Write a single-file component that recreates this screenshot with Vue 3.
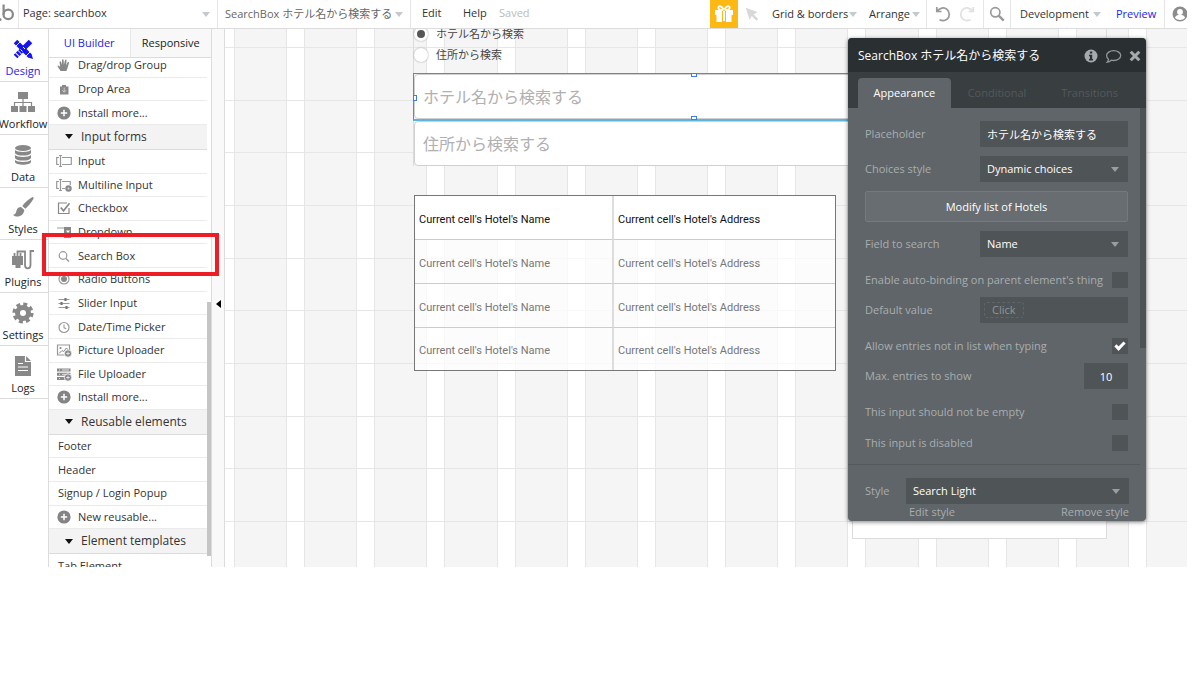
<template>

  <div class="app">

    <header class="topbar">

      <a class="logo" href="#" aria-label="Home">
        <svg width="18" height="28" viewBox="0 0 18 28">
          <circle cx="8.2" cy="14.4" r="4.700" fill="none" stroke="#888" stroke-width="2.200" />
          <path d="M3.600 4.500v10" stroke="#888" stroke-width="2.200" />
          <circle cx="0" cy="19.600" r="1.500" fill="#888" />
        </svg>
      </a>

      <div class="picker page-picker">
        <select aria-label="Page">
          <option>Page: searchbox</option>
        </select>
        <i class="caret"></i>
      </div>

      <div class="picker element-picker">
        <select aria-label="Element">
          <option>SearchBox ホテル名から検索する</option>
        </select>
        <i class="caret"></i>
      </div>

      <nav class="menus">
        <button>Edit</button>
        <button>Help</button>
        <span class="saved">Saved</span>
      </nav>

      <button class="gift" aria-label="Gift">
        <svg width="20" height="18" viewBox="0 0 20 18" fill="#fff">
          <path d="M1 5h7v5H1zM12 5h7v5h-7zM2.500 10H8v7H2.500zM12 10h5.500v7H12zM9 6h2v10H9z" />
          <path d="M9.500 4.800C5 5 4 3.800 4.300 2.400 4.900.4 8 .8 9.500 4.500M10.500 4.800c4.500.2 5.500-1 5.200-2.400C15.100.4 12 .8 10.500 4.500" fill="none" stroke="#fff" stroke-width="1.800" />
        </svg>
      </button>

      <button class="tool pointer" aria-label="Select">
        <svg width="14" height="14" viewBox="0 0 14 14">
          <path d="M.8 .8l11.700 4.300-3.900 2.400 4.700 4.400-1.900 1.900-4.600-4.700L4.600 13z" fill="#d8d8d8" />
        </svg>
      </button>

      <button class="drop">Grid &amp; borders <i class="caret"></i></button>
      <button class="drop arrange">Arrange <i class="caret"></i></button>

      <div class="history">
        <button class="tool" aria-label="Undo">
          <svg width="16" height="16" viewBox="0 0 16 16" fill="none" stroke="#999" stroke-width="1.700">
            <path d="M1.800 1v4.500h4.700M2.300 5.300C4.500 1.800 9 .8 12 3.400s3 7.500 0 9.800c-2.200 1.800-5 1.700-7.500.6" />
          </svg>
        </button>
        <button class="tool" aria-label="Redo">
          <svg width="16" height="16" viewBox="0 0 16 16" fill="none" stroke="#e0e0e0" stroke-width="1.700">
            <path d="M14.200 1v4.500H9.500M13.700 5.300C11.500 1.800 7 .8 4 3.400s-3 7.500 0 9.800c2.200 1.800 5 1.700 7.500.6" />
          </svg>
        </button>
      </div>

      <button class="tool find" aria-label="Search">
        <svg width="16" height="16" viewBox="0 0 16 16" fill="none" stroke="#999">
          <circle cx="6.300" cy="6.300" r="4.600" stroke-width="1.700" />
          <path d="M9.700 9.700l5 5" stroke-width="2.400" />
        </svg>
      </button>

      <button class="drop version">Development <i class="caret"></i></button>
      <a class="preview" href="#">Preview</a>

      <button class="avatar" aria-label="Account">
        <svg width="16" height="16" viewBox="0 0 16 16">
          <circle cx="8" cy="8" r="7.500" fill="#8c8c8c" />
          <circle cx="8" cy="6" r="2.900" fill="#fff" />
          <path d="M3 12c.2-2.600 2.500-3.300 5-3.300s4.800.7 5 3.300c-1.300 1.300-3 2-5 2s-3.700-.7-5-2z" fill="#fff" />
        </svg>
      </button>

    </header>

    <div class="workspace">

      <nav class="rail">
        <a
          v-for="tab in railTabs"
          :key="tab.name"
          href="#"
          :class="{ active: tab.name === 'Design' }"
        >
          <svg width="24" height="24" viewBox="0 0 24 24" v-html="tab.icon"></svg>
          <span>{{ tab.name }}</span>
        </a>
      </nav>

      <aside class="palette">

        <div class="palette-tabs">
          <button class="current">UI Builder</button>
          <button>Responsive</button>
        </div>

        <div class="palette-scroll">
          <ul class="palette-list">
            <li
              v-for="(entry, index) in entries"
              :key="index"
              :class="{ heading: entry.heading }"
            >
              <i v-if="entry.heading" class="caret dark"></i>
              <svg
                v-else-if="entry.icon"
                width="16"
                height="16"
                viewBox="0 0 16 16"
                v-html="icons[entry.icon]"
              ></svg>
              <span>{{ entry.name }}</span>
            </li>
          </ul>
          <div class="palette-thumb"></div>
        </div>

        <div class="highlight"></div>

      </aside>

      <button class="collapse" aria-label="Collapse"><i></i></button>

      <main class="canvas">

        <div class="columns">
          <div v-for="n in 13" :key="n"></div>
        </div>

        <div class="rows">
          <div v-for="n in 10" :key="n"></div>
        </div>

        <section class="search-group">

          <div class="radios">
            <label>
              <input v-model="mode" type="radio" value="name">
              ホテル名から検索
            </label>
            <label>
              <input v-model="mode" type="radio" value="address">
              住所から検索
            </label>
          </div>

          <div class="selected">
            <input type="text" aria-label="ホテル名から検索する" placeholder="ホテル名から検索する">
            <i class="grip top"></i>
            <i class="grip left"></i>
            <i class="grip bottom"></i>
          </div>

          <input class="address" type="text" aria-label="住所から検索する" placeholder="住所から検索する">

        </section>

        <table class="hotels">
          <tbody>
            <tr v-for="n in 4" :key="n">
              <td>Current cell's Hotel's Name</td>
              <td>Current cell's Hotel's Address</td>
            </tr>
          </tbody>
        </table>

        <div class="map-box"></div>

        <section class="editor">

          <header class="editor-title">
            <h2>SearchBox ホテル名から検索する</h2>
            <button aria-label="Info">
              <svg width="14" height="14" viewBox="0 0 14 14">
                <circle cx="7" cy="7" r="6.500" fill="#a4abae" />
                <path d="M5.900 2.500h2.300v2H5.900zM5 5.700h3.200v4.200H9v1.500H5V9.900h.9V7.200H5z" fill="#2a3032" />
              </svg>
            </button>
            <button aria-label="Comment">
              <svg width="17" height="15" viewBox="0 0 17 15" fill="none" stroke="#8f9799" stroke-width="1.300">
                <path d="M8.700 1.700c4 0 7 2.200 7 4.900s-3 4.900-7 4.900c-.9 0-1.700-.1-2.400-.3-1.300 1.200-2.600 1.800-4.100 2 .8-.9 1.200-1.800 1.300-2.900C2.300 9.400 1.600 8 1.600 6.600c0-2.700 3.100-4.900 7.100-4.900z" />
              </svg>
            </button>
            <button aria-label="Close">
              <svg width="12" height="12" viewBox="0 0 12 12">
                <path d="M1.700 1.700l8.600 8.600M10.300 1.700l-8.600 8.600" stroke="#a4abae" stroke-width="3" />
              </svg>
            </button>
          </header>

          <div class="editor-tabs">
            <button class="current">Appearance</button>
            <button>Conditional</button>
            <button>Transitions</button>
          </div>

          <div class="editor-body">

            <div class="field">
              <label for="placeholder">Placeholder</label>
              <input id="placeholder" type="text" value="ホテル名から検索する">
            </div>

            <div class="field">
              <label for="choices">Choices style</label>
              <div class="select">
                <select id="choices"><option>Dynamic choices</option></select>
                <i class="caret"></i>
              </div>
            </div>

            <button class="modify">Modify list of Hotels</button>

            <div class="field">
              <label for="search-field">Field to search</label>
              <div class="select">
                <select id="search-field"><option>Name</option></select>
                <i class="caret"></i>
              </div>
            </div>

            <div class="field check">
              <label for="binding">Enable auto-binding on parent element's thing</label>
              <input id="binding" type="checkbox">
            </div>

            <div class="field">
              <label for="default">Default value</label>
              <button id="default" class="expression"><span>Click</span></button>
            </div>

            <div class="field check">
              <label for="allow">Allow entries not in list when typing</label>
              <input id="allow" type="checkbox" checked>
            </div>

            <div class="field">
              <label for="max">Max. entries to show</label>
              <input id="max" class="number" type="text" value="10">
            </div>

            <div class="field check">
              <label for="required">This input should not be empty</label>
              <input id="required" type="checkbox">
            </div>

            <div class="field check">
              <label for="disabled">This input is disabled</label>
              <input id="disabled" type="checkbox">
            </div>

            <div class="style-block">
              <div class="style-row">
                <label for="style">Style</label>
                <div class="select">
                  <select id="style"><option>Search Light</option></select>
                  <i class="caret"></i>
                </div>
              </div>
              <div class="style-links">
                <a href="#">Edit style</a>
                <a href="#">Remove style</a>
              </div>
            </div>

            <div class="editor-thumb"></div>

          </div>

        </section>

      </main>

    </div>

  </div>

</template>

<script setup>

import { ref } from "vue"

const mode = ref("name")

const railTabs = [
  {
    name: "Design",
    icon: `<g fill="none" stroke="#1414f0">
      <path d="M4.500 4.500L19 19" stroke-width="5"/>
      <path d="M19.500 4.500L9 15" stroke-width="5"/>
      <path d="M8.500 15.500L4.500 19.500" stroke-width="5" stroke-dasharray="2.500 1"/>
      <path d="M5 9l4-4M15 19l4-4M9.500 12.500l2 2M12 10l2 2" stroke="#fff" stroke-width="1"/>
      </g><path d="M17 20.500l3.500-3.500 1.500 5z" fill="#1414f0"/>`
  },
  {
    name: "Workflow",
    icon: `<path d="M7 2h10v7H7zM0 16h7v6H0zM8.500 16h7v6h-7zM17 16h7v6h-7z" fill="#888"/>
      <path d="M12 9v7M3.500 16v-3.500h17V16" fill="none" stroke="#888" stroke-width="1.200"/>`
  },
  {
    name: "Data",
    icon: `<g fill="#888"><ellipse cx="12" cy="5" rx="8" ry="3"/>
      <path d="M4 7c2 2.600 14 2.600 16 0v3c-1 3.400-15 3.400-16 0zM4 12c2 2.600 14 2.600 16 0v3c-1 3.400-15 3.400-16 0zM4 17c2 2.600 14 2.600 16 0v2c-1 3.600-15 3.600-16 0z"/></g>`
  },
  {
    name: "Styles",
    icon: `<path d="M21.500 2c1.200 0 1.400 1 .8 2-2.500 4-5 7.500-8 9.800l-3-2.800C14 7.500 18 3.800 21.500 2z" fill="#888"/>
      <path d="M10 12l3.300 3c-.2 3.800-3.300 6.500-7 6.500-2 0-3.500-.8-4.300-1.800 3-.5 2.700-2 3.600-4.500C6.300 13 8 12 10 12z" fill="#888"/>`
  },
  {
    name: "Plugins",
    icon: `<path d="M1 8h11v9H9.500v3h-5v-3H1z" fill="#888"/>
      <path d="M3.500 9V5M9.500 9V5" stroke="#888" stroke-width="1.800"/>
      <path d="M6.500 8V3.500h7.500V17c0 4.500 5.500 4.500 5.500 0V3H23" fill="none" stroke="#888" stroke-width="1.800"/>`
  },
  {
    name: "Settings",
    icon: `<circle cx="12" cy="12" r="5.500" fill="none" stroke="#888" stroke-width="5"/>
      <circle cx="12" cy="12" r="8.800" fill="none" stroke="#888" stroke-width="3.600" stroke-dasharray="3.900 3.010"/>`
  },
  {
    name: "Logs",
    icon: `<path d="M4 2h11l5 5v15H4z" fill="#888"/>
      <path d="M14.500 2v5.500H20M7 9.500h5M7 13h10M7 16.500h10" fill="none" stroke="#fff" stroke-width="1.200"/>`
  }
]

const badge = `<circle cx="12" cy="11.500" r="3.700" fill="#888" stroke="#fff" stroke-width=".8"/>
  <path d="M12 9.700v3.600M10.200 11.500h3.600" stroke="#ddd" stroke-width="1"/>`

const icons = {
  hand: `<path d="M4.500 14c-1-2-2.700-3.600-3-5 .8-1 2 .2 2.700 1L3.500 5c.4-1.200 1.400-.8 1.600 0l.8 3L6 3c.4-1.100 1.500-.9 1.600 0l.3 4.700L9 3.200c.5-1 1.500-.6 1.500.3l-.4 5 1.500-3.200c.7-.8 1.600-.3 1.400.6L11.500 11c-.3 1.500-.7 2.300-1.300 3z" fill="#888"/>`,
  area: `<path d="M4 5.500h2V4h4v1.500h2.500v8H4z" fill="#888"/>
    <path d="M8.200 6.500v4.500M6.300 9.300l1.900 2 1.900-2" fill="none" stroke="#ccc" stroke-width="1"/>`,
  plus: `<circle cx="8" cy="8" r="6.600" fill="#848484"/>
    <path d="M8 4.800v6.400M4.800 8h6.400" stroke="#fff" stroke-width="1.500"/>`,
  input: `<path d="M3 4.500H.7v7H3M6 4.500h9.300v7H6M4.500 2.500v11M3 2.500h3M3 13.500h3" fill="none" stroke="#999" stroke-width="1.200"/>`,
  multi: `<path d="M3 4.500H.7v7H3M6 4.500h8.300V8M6 11.500h3M4.500 2.500v11M3 2.500h3M3 13.500h3" fill="none" stroke="#999" stroke-width="1.200"/>
    <circle cx="12.500" cy="11.500" r="3.200" fill="#888"/><circle cx="12.500" cy="11.500" r="1" fill="#ddd"/>`,
  check: `<path d="M13 8v5.500H2.500V3H11" fill="none" stroke="#888" stroke-width="1.200"/>
    <path d="M4.800 7.500l2.700 3.300 6-7.500" fill="none" stroke="#888" stroke-width="1.700"/>`,
  dropdown: `<path d="M1 4h8M1 12.500h8" stroke="#999" stroke-width="1.200"/>
    <path d="M8 3h7v11H8z" fill="#888"/><path d="M10 6.500h4l-2 2.500z" fill="#fff"/>`,
  search: `<circle cx="7" cy="7.500" r="3.800" fill="none" stroke="#999" stroke-width="1.200"/>
    <path d="M10 10.500l3 3" stroke="#999" stroke-width="1.500"/>`,
  radio: `<circle cx="8" cy="8" r="5" fill="none" stroke="#999" stroke-width="1.200"/><circle cx="8" cy="8" r="3" fill="#888"/>`,
  slider: `<path d="M2.500 4.500h11M2.500 8.500h11M2.500 12.500h11" stroke="#999" stroke-width="1.200"/>
    <path d="M9.500 3v3M5.500 7v3M10.500 11v3" stroke="#777" stroke-width="2.200"/>`,
  clock: `<circle cx="8" cy="8.500" r="5" fill="none" stroke="#999" stroke-width="1.200"/>
    <path d="M8 5.500v3.300l2.300 1" fill="none" stroke="#999" stroke-width="1.100"/>`,
  picture: `<path d="M1.500 3h12v10h-12z" fill="none" stroke="#999" stroke-width="1.200"/>
    <circle cx="4.500" cy="6" r="1.100" fill="#888"/><path d="M3 11.500l3-3 1.500 1 3-3.500 2 2.500" fill="none" stroke="#888"/>${badge}`,
  file: `<path d="M1 2.500h13.500v3H1zM1 6.800h13.500v3H1zM1 11h13.500v3H1z" fill="#888"/>
    <path d="M3 4h1M6 4h7M3 8.300h1M6 8.300h7M3 12.500h1" stroke="#fff" stroke-width=".8"/>${badge}`
}

const entries = [
  { name: "Drag/drop Group", icon: "hand" },
  { name: "Drop Area", icon: "area" },
  { name: "Install more...", icon: "plus" },
  { name: "Input forms", heading: true },
  { name: "Input", icon: "input" },
  { name: "Multiline Input", icon: "multi" },
  { name: "Checkbox", icon: "check" },
  { name: "Dropdown", icon: "dropdown" },
  { name: "Search Box", icon: "search" },
  { name: "Radio Buttons", icon: "radio" },
  { name: "Slider Input", icon: "slider" },
  { name: "Date/Time Picker", icon: "clock" },
  { name: "Picture Uploader", icon: "picture" },
  { name: "File Uploader", icon: "file" },
  { name: "Install more...", icon: "plus" },
  { name: "Reusable elements", heading: true },
  { name: "Footer" },
  { name: "Header" },
  { name: "Signup / Login Popup" },
  { name: "New reusable...", icon: "plus" },
  { name: "Element templates", heading: true },
  { name: "Tab Element" }
]

</script>

<style>

body{
  background:#fff;
}

</style>

<style scoped>

*{
  box-sizing:border-box;
}

.app{
  display:flex;
  flex-direction:column;
  height:84vh;
  min-height:480px;
  margin-right:13px;
  overflow:hidden;
  font-family:"Open Sans", "Noto Sans CJK JP", sans-serif;
  font-size:11px;
  line-height:16px;
  color:#333;
}

button,
input,
select{
  margin:0;
  padding:0;
  border:0;
  border-radius:0;
  background:none;
  font:inherit;
  color:inherit;
  appearance:none;
  outline:none;
}

a{
  color:inherit;
  text-decoration:none;
}

svg{
  display:block;
  flex:none;
}

.caret{
  flex:none;
  border:4px solid transparent;
  border-top:5px solid #c3c9cd;
  border-bottom:0;
}

.caret.dark{
  border-top-color:#111;
}

/* top bar */

.topbar{
  flex:none;
  display:flex;
  height:29px;
  border-bottom:1px solid #dcdcdc;
}

.topbar > *{
  flex:none;
  display:flex;
  align-items:center;
}

.logo{
  width:18px;
}

.picker{
  position:relative;
  border-left:1px solid #e6e6e6;
}

.picker select{
  width:100%;
  height:100%;
  padding:0 0 2px 4px;
}

.picker .caret{
  position:absolute;
  right:7px;
}

.page-picker{
  width:199px;
}

.element-picker{
  width:194px;
  color:#666;
  border-right:1px solid #e6e6e6;
}

.element-picker select{
  padding:0 0 0 7px;
}

.topbar .menus{
  flex:1;
  padding:0 0 2px 11px;
}

.menus button{
  width:41px;
  text-align:left;
}

.menus .saved{
  margin-left:-5px;
  color:#bbb;
}

.topbar .gift{
  width:28px;
  justify-content:center;
  background:#fdb813;
}

.tool{
  display:flex;
  align-items:center;
  justify-content:center;
}

.pointer{
  width:28px;
}

.drop{
  width:97px;
  justify-content:space-between;
  padding:0 6px;
  white-space:nowrap;
}

.arrange{
  width:63px;
  padding:0 6px;
}

.history{
  width:57px;
  justify-content:space-evenly;
  border-left:1px solid #e6e6e6;
}

.find{
  width:28px;
  border:solid #e6e6e6;
  border-width:0 1px;
}

.version{
  width:97px;
  padding:0 7px 0 9px;
}

.preview{
  width:56px;
  padding-left:8px;
  color:#2424e8;
}

.topbar .avatar{
  width:23px;
  padding-left:7px;
  overflow:hidden;
  border-left:1px solid #e6e6e6;
}

/* left side */

.workspace{
  flex:1;
  display:flex;
  min-height:0;
}

.rail{
  flex:none;
  display:grid;
  grid-template-columns:100%;
  grid-auto-rows:1fr;
  width:49px;
  height:370px;
}

.rail a{
  display:flex;
  flex-direction:column;
  align-items:center;
  justify-content:flex-end;
  gap:2px;
  padding:0 3px 2px 0;
  border-bottom:1px solid #dcdcdc;
  color:#222;
}

.rail a.active{
  color:#2424e8;
}

.palette{
  position:relative;
  flex:none;
  display:flex;
  flex-direction:column;
  width:163px;
  border-right:1px solid #dcdcdc;
  box-shadow:-1px 0 #dcdcdc;
}

.palette-tabs{
  flex:none;
  display:flex;
  height:29px;
  border-bottom:1px solid #dcdcdc;
}

.palette-tabs button{
  flex:1;
  background:#f8f8f8;
  border-left:1px solid #e6e6e6;
  color:#222;
}

.palette-tabs .current{
  background:#fff;
  border-left:0;
  color:#2424e8;
}

.palette-scroll{
  position:relative;
  flex:1;
  overflow:hidden;
}

.palette-list{
  display:flex;
  flex-direction:column;
  height:524px;
  margin:-4px 4px 0 0;
  padding:0;
  list-style:none;
}

.palette-list li{
  flex:1;
  display:flex;
  align-items:center;
  gap:6px;
  padding-left:7px;
  border-bottom:1px solid #ebebeb;
}

.palette-list li > span:only-child{
  padding-left:2px;
}

.palette-list .heading{
  flex:0 0 25px;
  gap:8px;
  padding-left:16px;
  background:#f3f3f3;
  border-bottom:1px solid #dcdcdc;
  font-size:12px;
}

.palette-thumb{
  position:absolute;
  top:244px;
  right:0;
  bottom:11px;
  width:4px;
  background:#c5c5c5;
}

.highlight{
  position:absolute;
  z-index:2;
  top:204px;
  left:-7px;
  right:-8px;
  height:43px;
  border:4px solid #ee1c24;
}

.collapse{
  flex:none;
  display:flex;
  align-items:center;
  justify-content:center;
  width:13px;
  padding-top:12px;
  background:#f9f9f9;
  border-right:1px solid #dcdcdc;
}

.collapse i{
  border:4px solid transparent;
  border-right:5px solid #000;
  border-left:0;
}

/* canvas */

.canvas{
  position:relative;
  flex:1;
  overflow:hidden;
  background:#f5f5f5;
}

.columns{
  position:absolute;
  inset:0 40px 0 0;
  display:flex;
  gap:17px;
  padding:0 17px 0 9px;
  background:#fff;
  border-right:1px solid #e6e6e6;
}

.columns div{
  flex:1;
  background:#f5f5f5;
  border:solid #e6e6e6;
  border-width:0 1px;
}

.rows{
  position:absolute;
  inset:0;
  display:grid;
  grid-template-rows:19px repeat(9, 1fr);
  padding-bottom:45px;
}

.rows div{
  border-bottom:1px solid #e6e6e6;
}

.search-group{
  position:absolute;
  top:-3px;
  left:188px;
  right:80px;
  border:solid #dcdcdc;
  border-width:0 1px;
}

.radios{
  display:flex;
  flex-direction:column;
  gap:5px;
  height:47px;
}

.radios label{
  display:flex;
  align-items:center;
  gap:8px;
  height:16px;
  color:#444;
}

.radios input{
  width:14px;
  height:14px;
  border:4px solid #fff;
  border-radius:50%;
  background:#fff;
  box-shadow:0 0 2px #999;
}

.radios input:checked{
  border-width:3px;
  background:#555;
}

.selected{
  position:relative;
  height:48px;
  margin-left:-1px;
  border:1px solid #2b9fce;
  border-bottom:2px solid #5ab6dc;
}

.search-group input[type="text"]{
  display:block;
  width:100%;
  height:45px;
  padding:0 8px;
  background:#fff;
  border:1px solid #d0d0d0;
  border-radius:4px;
  font-size:16px;
}

.search-group .address{
  border-bottom-width:2px;
}

.search-group input::placeholder{
  color:#b0b0b0;
  opacity:1;
}

.grip{
  position:absolute;
  width:6px;
  height:4px;
  background:#fff;
  border:1px solid #3f7ee8;
}

.grip.top{
  top:-1px;
  left:277px;
}

.grip.bottom{
  bottom:-1px;
  left:277px;
}

.grip.left{
  top:21px;
  left:-1px;
  width:4px;
  height:6px;
}

.hotels{
  position:absolute;
  top:166px;
  left:189px;
  width:422px;
  height:176px;
  border:1px solid #777;
  border-collapse:separate;
  border-spacing:0;
  table-layout:fixed;
  font-family:Roboto, "Liberation Sans", sans-serif;
  color:#777;
}

.hotels td{
  padding:4px 4px 0;
  background:rgba(255,255,255,.7);
  border-bottom:1px solid #ccc;
}

.hotels td:first-child{
  width:199px;
  border-right:2px solid #ddd;
}

.hotels tr:first-child td{
  background:#fff;
  color:#111;
}

.hotels tr:last-child td{
  border-bottom:0;
}

.map-box{
  position:absolute;
  top:480px;
  left:627px;
  right:80px;
  height:30px;
  background:#fff;
  border:1px solid #dcdcdc;
}

/* property editor */

.editor{
  position:absolute;
  top:9px;
  right:41px;
  width:298px;
  overflow:hidden;
  border-radius:4px;
  background:#5f6568;
  box-shadow:0 1px 4px rgba(0,0,0,.5);
  color:#a9aeb0;
}

.editor-title{
  display:flex;
  align-items:center;
  gap:7px;
  height:34px;
  padding:2px 5px 0 10px;
  background:#2a3032;
}

.editor-title h2{
  flex:1;
  margin:0;
  font-size:12px;
  font-weight:400;
  color:#fff;
}

.editor-tabs{
  display:flex;
  height:36px;
  padding:6px 10px 0;
  background:#393e41;
}

.editor-tabs button{
  flex:1;
  color:#54595c;
}

.editor-tabs .current{
  border-radius:4px 4px 0 0;
  background:#5f6568;
  color:#fff;
}

.editor-body{
  position:relative;
  padding:4px 18px 0 17px;
}

.editor-thumb{
  position:absolute;
  top:0;
  right:0;
  width:6px;
  height:240px;
  background:#4d5255;
}

.field{
  display:flex;
  align-items:center;
  justify-content:space-between;
  height:26px;
  margin-top:9px;
}

.field.check{
  height:16px;
  margin-top:15px;
}

.field input,
.select,
.expression{
  width:148px;
  height:26px;
  background:#4f5457;
  color:#fff;
}

.field input{
  padding:0 7px;
}

.field .number{
  width:44px;
  text-align:center;
}

.field input[type="checkbox"]{
  width:16px;
  height:16px;
  padding:0;
}

.field input[type="checkbox"]:checked::after{
  content:"";
  display:block;
  box-sizing:border-box;
  width:10px;
  height:6px;
  margin:4px 3px;
  border:solid #fff;
  border-width:0 0 3px 3px;
  transform:rotate(-45deg);
}

.select{
  position:relative;
  display:flex;
  align-items:center;
}

.select select{
  width:100%;
  height:100%;
  padding-left:7px;
}

.select .caret{
  position:absolute;
  right:9px;
  border-top-color:#999ea0;
}

.expression{
  padding-left:4px;
  text-align:left;
}

.expression span{
  display:inline-block;
  padding:0 7px;
  border:1px dashed #5f6568;
  border-radius:3px;
  line-height:14px;
  color:#8f9496;
}

.modify{
  display:block;
  width:100%;
  height:31px;
  margin-top:9px;
  border:1px solid #747a7d;
  border-radius:2px;
  background:#676d70;
  color:#fff;
}

.style-block{
  margin:13px -12px 0 -17px;
  padding:13px 11px 0 17px;
  border-top:1px solid #54595c;
}

.style-row{
  display:flex;
  align-items:center;
  justify-content:space-between;
}

.style-row .select{
  width:223px;
}

.style-links{
  display:flex;
  justify-content:space-between;
  height:17px;
  padding-left:44px;
}

</style>
